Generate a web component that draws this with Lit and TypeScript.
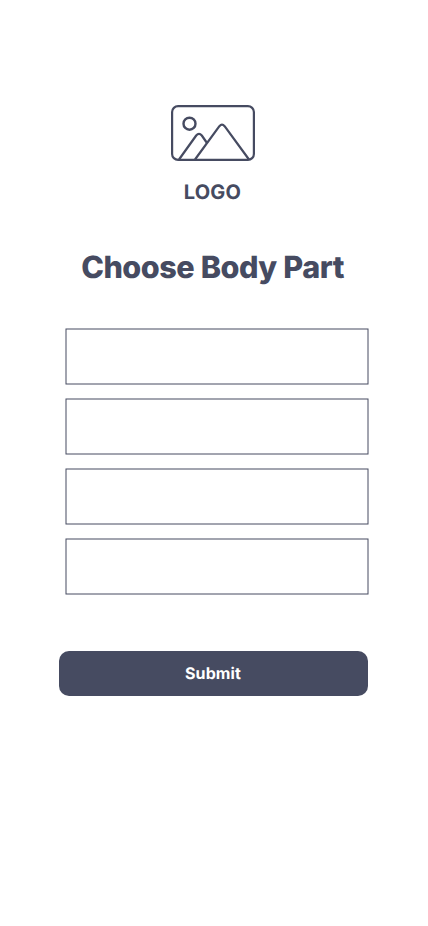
import { LitElement, html, css } from "lit";

class AppRoot extends LitElement {
  static styles = css`
    :host { display: block; }
    .screen { box-sizing: border-box; width: 428px; height: 926px; background: #fff; color: #464b61; font-family: Inter, sans-serif; font-optical-sizing: none; text-rendering: geometricPrecision; display: flex; flex-direction: column; padding-top: 105px; overflow: hidden; }
    .mark { display: block; width: 84px; height: 56px; margin-left: 171px; }
    .logo { margin-top: 19px; width: 425px; text-align: center; font-size: 20px; line-height: 24px; font-weight: 700; letter-spacing: 0.2px; }
    h1 { margin: 44px 0 0; width: 425px; text-align: center; font-size: 30.6px; line-height: 39px; font-weight: 800; letter-spacing: -0.52px; word-spacing: 0.5px; }
    .fields { display: flex; flex-direction: column; gap: 13px; margin: 41px 0 0 65px; width: 304px; }
    .field { display: block; width: 304px; height: 57px; }
    .submit { margin: 56px 0 0 59px; width: 309px; height: 45px; border: 0; border-radius: 10px; background: #464b61; color: #fff; font: 700 16px/19px Inter, sans-serif; font-optical-sizing: none; text-rendering: geometricPrecision; letter-spacing: 0.12px; padding: 0 1px 0 0; }
  `;

  render() {
    return html`
      <main class="screen">
        <svg class="mark" viewBox="0 0 84 56" fill="none" stroke="#464b61" stroke-width="2.2" stroke-linejoin="round">
          <rect x="1.1" y="1.1" width="81.8" height="53.8" rx="6" />
          <circle cx="18.5" cy="18.7" r="6" stroke-width="2.4" />
          <path d="M8 54.5 L25.2 30.5 Q28 27.2 30.8 30.5 L36 38" />
          <path d="M24 54.5 L48.4 21.2 Q51 18 53.6 21.2 L78 54.5" />
        </svg>
        <div class="logo">LOGO</div>
        <h1>Choose Body Part</h1>
        <div class="fields">
          ${[1, 2, 3, 4].map(
            () => html`<svg class="field" viewBox="0 0 304 57">
              <rect x="1" y="1" width="302" height="55" fill="#fff" stroke="#464b61" />
            </svg>`
          )}
        </div>
        <button class="submit">Submit</button>
      </main>
    `;
  }
}
customElements.define("app-root", AppRoot);
